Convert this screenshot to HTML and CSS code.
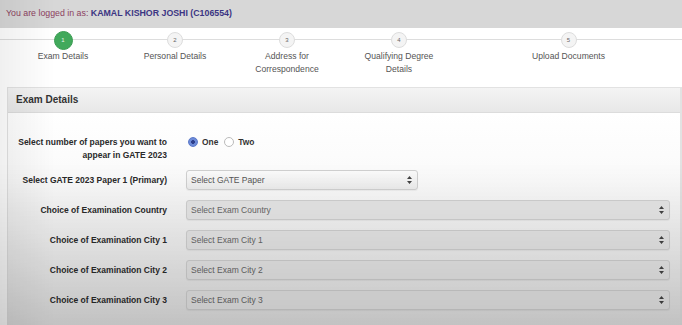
FILE: index.html
```html
<!DOCTYPE html>
<html lang="en">
  <head>
    <meta charset="UTF-8" />
    <meta name="viewport" content="width=device-width, initial-scale=1.0" />
    <title>GOAPS - Exam Details</title>
    <link rel="stylesheet" href="styles.css">
  </head>
  <body>
    <div class="topbar">
      <span class="logged">You are logged in as:</span>
      <span class="user">KAMAL KISHOR JOSHI (C106554)</span>
    </div>

    <!-- Steps -->
    <ol class="steps">
      <li class="step active"><span class="dot">1</span><span class="name">Exam Details</span></li>
      <li class="step"><span class="dot">2</span><span class="name">Personal Details</span></li>
      <li class="step"><span class="dot">3</span><span class="name">Address for<br />Correspondence</span></li>
      <li class="step"><span class="dot">4</span><span class="name">Qualifying Degree<br />Details</span></li>
      <li class="step"><span class="dot">5</span><span class="name">Upload Documents</span></li>
    </ol>

    <div class="panel">
      <div class="panel-head">Exam Details</div>
      <div class="panel-body">
        <div class="row first">
          <label class="lbl">Select number of papers you want to<br />appear in GATE 2023</label>
          <div class="radios">
            <span class="radio checked"></span><span class="opt">One</span>
            <span class="radio"></span><span class="opt">Two</span>
          </div>
        </div>
        <div class="row">
          <label class="lbl">Select GATE 2023 Paper 1 (Primary)</label>
          <div class="select short">Select GATE Paper
            <svg class="arr" width="5" height="8" viewBox="0 0 5 8"><path d="M2.5 0L5 3H0z M2.5 8L0 5h5z" fill="#444"/></svg>
          </div>
        </div>
        <div class="row">
          <label class="lbl">Choice of Examination Country</label>
          <div class="select off">Select Exam Country
            <svg class="arr" width="5" height="8" viewBox="0 0 5 8"><path d="M2.5 0L5 3H0z M2.5 8L0 5h5z" fill="#444"/></svg>
          </div>
        </div>
        <div class="row">
          <label class="lbl">Choice of Examination City 1</label>
          <div class="select off">Select Exam City 1
            <svg class="arr" width="5" height="8" viewBox="0 0 5 8"><path d="M2.5 0L5 3H0z M2.5 8L0 5h5z" fill="#444"/></svg>
          </div>
        </div>
        <div class="row">
          <label class="lbl">Choice of Examination City 2</label>
          <div class="select off">Select Exam City 2
            <svg class="arr" width="5" height="8" viewBox="0 0 5 8"><path d="M2.5 0L5 3H0z M2.5 8L0 5h5z" fill="#444"/></svg>
          </div>
        </div>
        <div class="row">
          <label class="lbl">Choice of Examination City 3</label>
          <div class="select off">Select Exam City 3
            <svg class="arr" width="5" height="8" viewBox="0 0 5 8"><path d="M2.5 0L5 3H0z M2.5 8L0 5h5z" fill="#444"/></svg>
          </div>
        </div>
      </div>
    </div>
    <div class="shade"></div>
  </body>
</html>
```

FILE: styles.css
```css
body {
  margin: 0;
  background: #fff;
  color: #333;
  font-family: "Liberation Sans", Arial, sans-serif;
  overflow: hidden;
}

/* Top bar */
.topbar {
  height: 28px;
  background: #d7d7d7;
  padding: 0 6px;
  font-size: 8.8px;
  line-height: 26px;
}
.logged {
  color: #8c3f5f;
}
.user {
  color: #3b3583;
  font-weight: 700;
}

/* Steps */
.steps {
  display: grid;
  grid-template-columns: 112px 112px 112px 112px 1fr;
  margin: 0;
  padding: 4px 0 0 7px;
  height: 55px;
  list-style: none;
  background: linear-gradient(#ddd, #ddd) no-repeat 0 11px / 100% 1px;
}
.step {
  display: flex;
  flex-direction: column;
  align-items: center;
}
.dot {
  width: 14px;
  height: 14px;
  border-radius: 50%;
  background: #f4f4f4;
  border: 1px solid #ddd;
  font-size: 6px;
  line-height: 14px;
  text-align: center;
  color: #666;
}
.active .dot {
  width: 17px;
  height: 17px;
  line-height: 17px;
  margin-top: -1px;
  margin-bottom: -2px;
  border-color: #3a9c52;
  background: #41a95b;
  color: #e8f5e8;
}
.name {
  margin-top: 2px;
  font-size: 8.6px;
  line-height: 13px;
  color: #555;
  text-align: center;
}

/* Panel */
.panel {
  margin-left: 7px;
  border: 1px solid #e2e2e2;
  border-right-width: 2px;
}
.panel-head {
  height: 24px;
  line-height: 24px;
  padding: 0 8px;
  font-size: 10px;
  font-weight: 700;
  color: #333;
  background: linear-gradient(#f4f4f4, #e8e8e8);
  border-bottom: 1px solid #dcdcdc;
}
.panel-body {
  display: flex;
  flex-direction: column;
  gap: 10px;
  padding: 23px 10px 30px 0;
  background: linear-gradient(#fff 0%, #fafafa 30%, #ececec 70%, #e0e0e0 100%);
}
.row {
  display: grid;
  grid-template-columns: 159px 1fr;
  column-gap: 19px;
  align-items: center;
}
.row.first {
  margin-bottom: -2px;
}
.lbl {
  font-size: 8.5px;
  font-weight: 700;
  line-height: 13px;
  text-align: right;
  color: #2a2a2a;
}
.radios {
  display: flex;
  align-items: center;
  align-self: start;
  padding: 1px 0 0 2px;
  font-size: 8.4px;
  font-weight: 700;
  color: #333;
}
.radio {
  width: 8px;
  height: 8px;
  border-radius: 50%;
  border: 1px solid #bbb;
  background: #fff;
  margin-right: 4px;
}
.radio.checked {
  border-color: #5a78c9;
  background: radial-gradient(circle, #2d3f8c 0 1.6px, #6c8ad8 2.2px);
}
.opt {
  margin-right: 6px;
}
.select {
  position: relative;
  box-sizing: border-box;
  height: 20px;
  line-height: 18px;
  padding: 0 4px;
  font-size: 8.5px;
  color: #555;
  border: 1px solid #d0d0d0;
  border-radius: 3px;
  background: linear-gradient(#fbfbfb, #ececec);
  box-shadow: 0 1px 1px rgba(0, 0, 0, 0.05);
}
.select.short {
  width: 232px;
}
.select.off {
  background: #e6e6e6;
  color: #666;
}
.arr {
  position: absolute;
  right: 5px;
  top: 5px;
}

/* screen vignette */
.shade {
  position: fixed;
  inset: 0;
  pointer-events: none;
  background: linear-gradient(rgba(0, 0, 0, 0) 50%, rgba(0, 0, 0, 0.14) 100%),
    linear-gradient(90deg, rgba(0, 0, 0, 0.06), rgba(0, 0, 0, 0) 8%);
}
```
